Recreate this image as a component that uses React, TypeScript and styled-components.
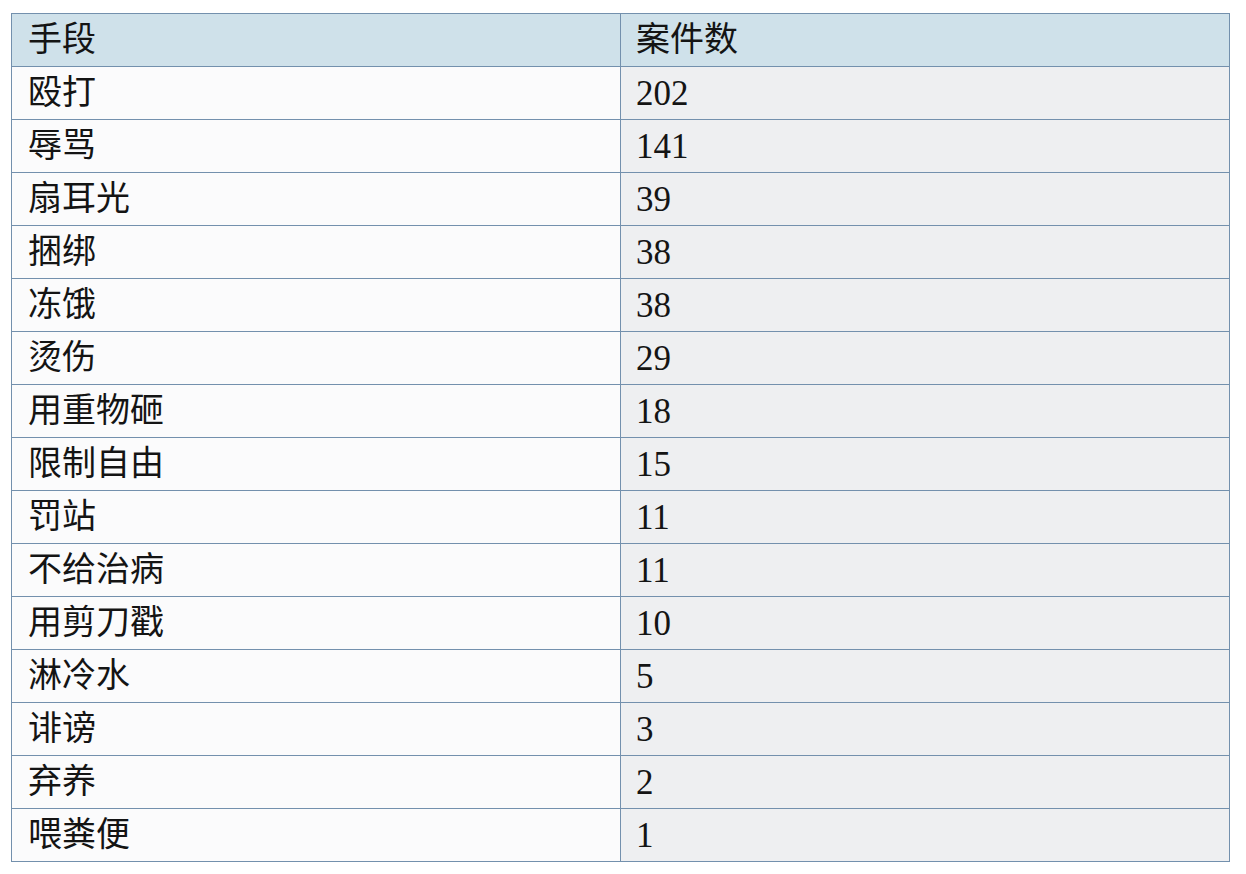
import React from "react";
import styled, { createGlobalStyle } from "styled-components";

const Global = createGlobalStyle`
  html, body { margin: 0; padding: 0; background: #ffffff; }
  body { font-family: "Liberation Serif", "Noto Sans CJK SC", serif; }
`;

const Page = styled.div`
  padding: 13px 0 0 11px;
`;

const Table = styled.div`
  width: 1219px;
  box-sizing: border-box;
  border: 1px solid #7390ad;
  display: grid;
  grid-template-columns: 609px 1fr;
`;

const Cell = styled.div<{ $head?: boolean; $col: number; $last?: boolean }>`
  height: 52px;
  box-sizing: content-box;
  display: flex;
  align-items: center;
  padding-left: ${(p) => (p.$col === 0 ? 16 : 15)}px;
  font-size: ${(p) => (p.$col === 0 || p.$head ? 34 : 35)}px;
  line-height: 1;
  color: #141414;
  border-bottom: ${(p) => (p.$last ? "none" : "1px solid #7390ad")};
  border-right: ${(p) => (p.$col === 0 ? "1px solid #7390ad" : "none")};
  background: ${(p) =>
    p.$head ? "#cfe1ea" : p.$col === 0 ? "#fbfbfc" : "#eeeff1"};
`;

const rows: [string, string][] = [
  ["殴打", "202"],
  ["辱骂", "141"],
  ["扇耳光", "39"],
  ["捆绑", "38"],
  ["冻饿", "38"],
  ["烫伤", "29"],
  ["用重物砸", "18"],
  ["限制自由", "15"],
  ["罚站", "11"],
  ["不给治病", "11"],
  ["用剪刀戳", "10"],
  ["淋冷水", "5"],
  ["诽谤", "3"],
  ["弃养", "2"],
  ["喂粪便", "1"],
];

export default function App() {
  return (
    <>
      <Global />
      <Page>
        <Table>
          <Cell $head $col={0}>手段</Cell>
          <Cell $head $col={1}>案件数</Cell>
          {rows.map(([a, b], i) => {
            const last = i === rows.length - 1;
            return (
              <React.Fragment key={a}>
                <Cell $col={0} $last={last}>{a}</Cell>
                <Cell $col={1} $last={last}>{b}</Cell>
              </React.Fragment>
            );
          })}
        </Table>
      </Page>
    </>
  );
}
